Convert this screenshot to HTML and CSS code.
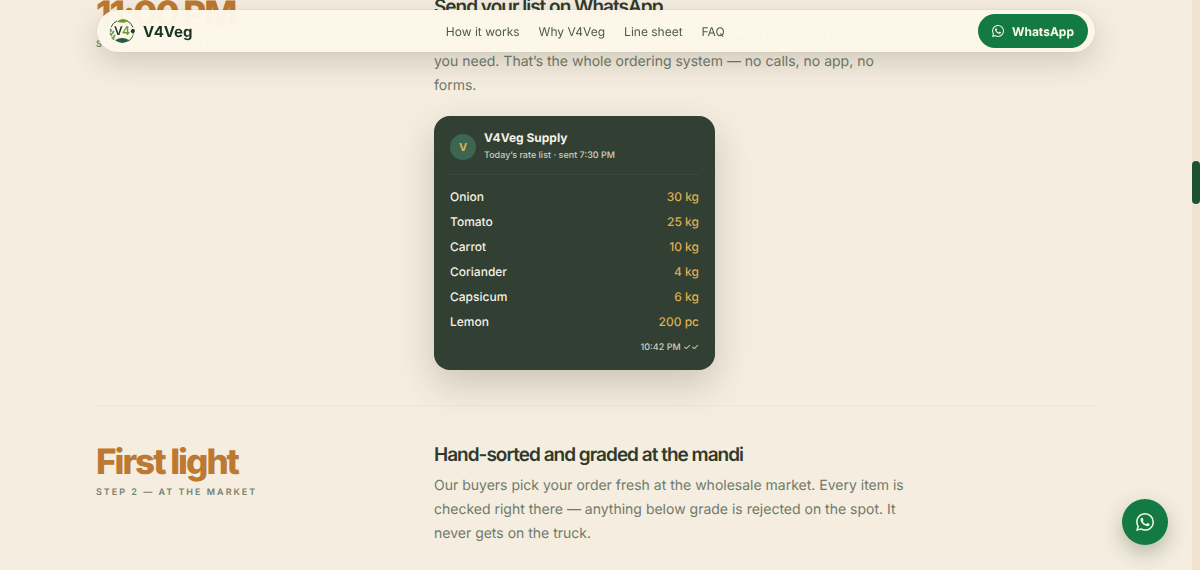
FILE: index.html
```
<!DOCTYPE html>
<html lang="en">
<head>
    <meta charset="UTF-8">
    <meta name="viewport" content="width=device-width, initial-scale=1.0">
    <title>V4Veg - How it works</title>
    <link rel="stylesheet" href="styles.css">
</head>
<body>
    <svg class="sprite" aria-hidden="true">
        <symbol id="whatsapp" viewBox="0 0 24 24">
            <path fill="currentColor" d="M17.5 14.4c-.3-.15-1.76-.87-2.03-.97-.27-.1-.47-.15-.67.15-.2.3-.77.97-.94 1.16-.17.2-.35.22-.64.08-.3-.15-1.26-.46-2.39-1.48-.88-.79-1.48-1.76-1.65-2.06-.17-.3-.02-.46.13-.6.13-.14.3-.35.45-.53.15-.17.2-.3.3-.5.1-.2.05-.37-.03-.52-.07-.15-.67-1.61-.91-2.21-.24-.58-.49-.5-.67-.51h-.57c-.2 0-.52.07-.8.37-.27.3-1.04 1.02-1.04 2.48s1.07 2.88 1.21 3.07c.15.2 2.1 3.2 5.08 4.49.71.3 1.26.49 1.7.63.71.22 1.36.19 1.87.12.57-.09 1.76-.72 2-1.42.25-.69.25-1.29.18-1.41-.07-.13-.27-.2-.57-.35M12.05 21.8a9.87 9.87 0 0 1-5.03-1.38l-.36-.21-3.74.98 1-3.65-.24-.37a9.86 9.86 0 0 1-1.51-5.26c0-5.45 4.44-9.88 9.89-9.88a9.83 9.83 0 0 1 9.88 9.89c0 5.45-4.44 9.88-9.89 9.88M20.46 3.49A11.82 11.82 0 0 0 12.05 0C5.5 0 .16 5.34.16 11.89c0 2.1.55 4.14 1.59 5.95L.06 24l6.3-1.65a11.88 11.88 0 0 0 5.69 1.45c6.55 0 11.89-5.34 11.89-11.9a11.82 11.82 0 0 0-3.48-8.41"/>
        </symbol>
    </svg>

    <header class="nav">
        <a class="brand" href="#top">
            <svg class="logo" viewBox="0 0 26 26" aria-hidden="true">
                <g fill="none" stroke="#31533b" stroke-width="1">
                    <path d="M8 2.8A11.4 11.4 0 0 0 2.2 9"/>
                    <path d="M18 2.8A11.4 11.4 0 0 1 24 9.5"/>
                    <path d="M24 17.5A12 12 0 0 1 19.5 23"/>
                </g>
                <path fill="#6b9a35" d="M8 3.6Q13-1 19 2.6 17 5.4 13 4.4 10 5 8 3.6z"/>
                <path fill="#275e3c" d="M6 22.2q7-4.4 14.5 0-7 5.6-14.5 0z"/>
                <path fill="#1d3a2a" d="M22.6 14.8q-1.6-.8-.6-2.2.2-1.6 1.8-1.5 2-.5 2 1.4.2 1.4-.6 2.2l-.9.2.3 1.8h-1l.1-1.8z"/>
                <g fill="#6f9c5a">
                    <ellipse cx="1.8" cy="12.2" rx="1" ry="2"/>
                    <ellipse cx="4" cy="14.4" rx="1" ry="2" transform="rotate(35 4 14.4)"/>
                    <ellipse cx="2" cy="16.4" rx="1" ry="2" transform="rotate(-35 2 16.4)"/>
                    <ellipse cx="5.2" cy="18.4" rx="1" ry="2" transform="rotate(25 5.2 18.4)"/>
                    <ellipse cx="4" cy="20.4" rx="1" ry="2" transform="rotate(-50 4 20.4)"/>
                </g>
                <text class="logo-v" x="5" y="17">V</text>
                <text class="logo-4" x="13" y="17">4</text>
            </svg>
            <span>V4Veg</span>
        </a>
        <nav class="nav-links">
            <a href="#how">How it works</a>
            <a href="#why">Why V4Veg</a>
            <a href="#line">Line sheet</a>
            <a href="#faq">FAQ</a>
        </nav>
        <a class="nav-cta" href="#whatsapp-chat">
            <svg class="cta-icon" aria-hidden="true"><use href="#whatsapp"/></svg>
            WhatsApp
        </a>
    </header>

    <main class="steps" id="how">
        <section class="step">
            <div>
                <div class="step-time">11:00 PM</div>
                <div class="step-label">Step 1 — Tonight</div>
            </div>
            <div>
                <h3>Send your list on WhatsApp</h3>
                <p>Our rate list arrives every evening. Just reply with the exact quantities you need. That’s the whole ordering system — no calls, no app, no forms.</p>
                <div class="chat">
                    <div class="chat-head">
                        <span class="avatar">V</span>
                        <div>
                            <div class="chat-name">V4Veg Supply</div>
                            <div class="chat-sub">Today’s rate list · sent 7:30 PM</div>
                        </div>
                    </div>
                    <table class="chat-list">
                        <tr><th scope="row">Onion</th><td>30 kg</td></tr>
                        <tr><th scope="row">Tomato</th><td>25 kg</td></tr>
                        <tr><th scope="row">Carrot</th><td>10 kg</td></tr>
                        <tr><th scope="row">Coriander</th><td>4 kg</td></tr>
                        <tr><th scope="row">Capsicum</th><td>6 kg</td></tr>
                        <tr><th scope="row">Lemon</th><td>200 pc</td></tr>
                    </table>
                    <div class="chat-time">10:42 PM ✓✓</div>
                </div>
            </div>
        </section>

        <section class="step">
            <div>
                <div class="step-time">First light</div>
                <div class="step-label">Step 2 — At the market</div>
            </div>
            <div>
                <h3>Hand-sorted and graded at the mandi</h3>
                <p>Our buyers pick your order fresh at the wholesale market. Every item is checked right there — anything below grade is rejected on the spot. It never gets on the truck.</p>
            </div>
        </section>
    </main>

    <a class="float-btn" href="#whatsapp-chat" aria-label="Chat on WhatsApp">
        <svg class="float-icon" aria-hidden="true"><use href="#whatsapp"/></svg>
    </a>
    <div class="rail"><div class="rail-thumb"></div></div>
</body>
</html>
```
FILE: styles.css
```
* {
    box-sizing: border-box;
}

html {
    scrollbar-width: none;
}

body {
    margin: 0;
    padding-right: 8px;
    background: #f5ede0;
    color: #2f3a2c;
    font-family: Inter, "Liberation Sans", sans-serif;
    text-rendering: geometricPrecision;
    overflow-x: hidden;
}

a {
    color: inherit;
    text-decoration: none;
}

.sprite {
    display: none;
}

/* floating nav */
.nav {
    position: fixed;
    z-index: 10;
    top: 10px;
    left: 0;
    right: 8px;
    width: calc(100% - 40px);
    max-width: 998px;
    margin: 0 auto;
    padding: 4px 7px 4px 12px;
    display: flex;
    justify-content: space-between;
    align-items: center;
    border-radius: 999px;
    background: rgba(252, 247, 233, 0.98);
    box-shadow: 0 0 1px rgba(60, 50, 30, 0.3), 0 10px 30px rgba(60, 60, 40, 0.2);
}

.brand {
    display: flex;
    align-items: center;
    gap: 8px;
    font-size: 15px;
    font-weight: 700;
    color: #1b3524;
}

.logo {
    width: 26px;
    height: 26px;
}

.logo-v,
.logo-4 {
    font-size: 12px;
    font-weight: 600;
    fill: #1d3a2a;
}

.logo-4 {
    fill: #6b9a35;
}

.nav-links {
    display: flex;
    gap: 19px;
    font-size: 12px;
    color: #4c5a4c;
}

.nav-cta {
    display: flex;
    align-items: center;
    gap: 8px;
    height: 34px;
    padding: 0 14px;
    border-radius: 999px;
    background: #127a42;
    color: #fdf8ec;
    font-size: 12px;
    font-weight: 700;
}

.cta-icon {
    width: 12px;
    height: 12px;
}

/* steps timeline */
.steps {
    max-width: 1000px;
    margin: -42px auto 0;
}

.step {
    display: grid;
    grid-template-columns: 290px 1fr;
    gap: 48px;
    padding: 35px 0;
}

.step + .step {
    border-top: 1px solid #efe5d6;
}

.step-time {
    font-size: 35px;
    line-height: 42px;
    font-weight: 800;
    letter-spacing: -2px;
    color: #bd7831;
}

.step-label {
    margin-top: 3px;
    font-size: 9px;
    line-height: 14px;
    font-weight: 600;
    letter-spacing: 2px;
    text-transform: uppercase;
    color: #75806e;
}

h3 {
    margin: 0 0 5px;
    font-size: 19px;
    line-height: 28px;
    font-weight: 600;
    letter-spacing: -1px;
}

p {
    max-width: 480px;
    margin: 0;
    font-size: 14px;
    line-height: 24px;
    color: #6f7a69;
}

/* chat card */
.chat {
    max-width: 281px;
    margin-top: 18px;
    padding: 13px 16px 14px;
    border-radius: 16px;
    background: #323f33;
    color: #f4f1e6;
    box-shadow: 0 14px 36px rgba(60, 60, 40, 0.22);
}

.chat-head {
    display: flex;
    align-items: center;
    gap: 8px;
    padding-bottom: 9px;
    border-bottom: 1px solid #3b493c;
}

.avatar {
    width: 26px;
    height: 26px;
    border-radius: 50%;
    background: #3d6650;
    color: #d9b354;
    font-size: 11px;
    font-weight: 700;
    line-height: 26px;
    text-align: center;
}

.chat-name {
    font-size: 12px;
    line-height: 18px;
    font-weight: 700;
}

.chat-sub {
    font-size: 9px;
    line-height: 18px;
    font-weight: 500;
    color: #c9cfc4;
}

.chat-list {
    width: 100%;
    margin-top: 9px;
    border-collapse: collapse;
    font-size: 12px;
    line-height: 25px;
}

.chat-list th,
.chat-list td {
    padding: 0;
    font-weight: 500;
    text-align: left;
}

.chat-list td {
    color: #dcae52;
    text-align: right;
}

.chat-time {
    margin-top: 6px;
    font-size: 9px;
    line-height: 16px;
    font-weight: 500;
    text-align: right;
    color: #c9cfc4;
}

.float-btn {
    position: fixed;
    z-index: 10;
    right: 32px;
    bottom: 25px;
    width: 46px;
    height: 46px;
    display: flex;
    align-items: center;
    justify-content: center;
    border-radius: 50%;
    background: #127a42;
    color: #f3fbe9;
    box-shadow: 0 8px 20px rgba(40, 70, 40, 0.3);
}

.float-icon {
    width: 18px;
    height: 18px;
}

/* scroll rail */
.rail {
    position: fixed;
    top: 0;
    right: 0;
    bottom: 0;
    width: 8px;
    padding-top: 161px;
    background: #efe2cf;
}

.rail-thumb {
    height: 43px;
    border-radius: 4px;
    background: #1d5231;
}
```
